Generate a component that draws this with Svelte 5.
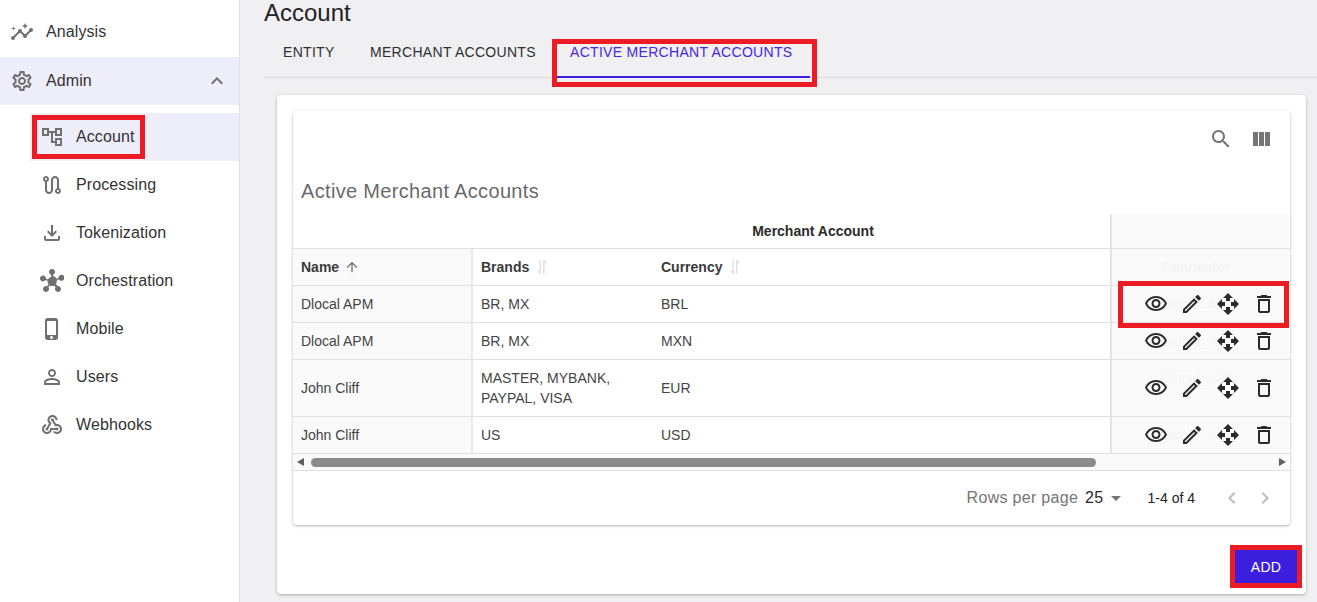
<script>
  const icons = {
    insights: 'M21 8c-1.45 0-2.26 1.44-1.93 2.51l-3.55 3.56c-.3-.09-.74-.09-1.04 0l-2.55-2.55C12.27 10.45 11.46 9 10 9c-1.45 0-2.27 1.44-1.93 2.52l-4.56 4.55C2.44 15.74 1 16.55 1 18c0 1.1.9 2 2 2 1.45 0 2.26-1.44 1.93-2.51l4.55-4.56c.3.09.74.09 1.04 0l2.55 2.55C12.73 16.55 13.54 18 15 18c1.45 0 2.27-1.44 1.93-2.52l3.56-3.55c1.07.33 2.51-.48 2.51-1.93 0-1.1-.9-2-2-2zM15 9l.94-2.07L18 6l-2.06-.93L15 3l-.92 2.07L12 6l2.08.93zM3.5 11L4 9l2-.5L4 8l-.5-2L3 8l-2 .5L3 9z',
    settings: 'M19.43 12.98c.04-.32.07-.64.07-.98 0-.34-.03-.66-.07-.98l2.11-1.65c.19-.15.24-.42.12-.64l-2-3.46c-.09-.16-.26-.25-.44-.25-.06 0-.12.01-.17.03l-2.49 1c-.52-.4-1.08-.73-1.69-.98l-.38-2.65C14.46 2.18 14.25 2 14 2h-4c-.25 0-.46.18-.49.42l-.38 2.65c-.61.25-1.17.59-1.69.98l-2.49-1c-.06-.02-.12-.03-.18-.03-.17 0-.34.09-.43.25l-2 3.46c-.13.22-.07.49.12.64l2.11 1.65c-.04.32-.07.65-.07.98 0 .33.03.66.07.98l-2.11 1.65c-.19.15-.24.42-.12.64l2 3.46c.09.16.26.25.44.25.06 0 .12-.01.17-.03l2.49-1c.52.4 1.08.73 1.69.98l.38 2.65c.03.24.24.42.49.42h4c.25 0 .46-.18.49-.42l.38-2.65c.61-.25 1.17-.59 1.69-.98l2.49 1c.06.02.12.03.18.03.17 0 .34-.09.43-.25l2-3.46c.12-.22.07-.49-.12-.64l-2.11-1.65zm-1.98-1.71c.04.31.05.52.05.73 0 .21-.02.43-.05.73l-.14 1.13.89.7 1.08.84-.7 1.21-1.27-.51-1.04-.42-.9.68c-.43.32-.84.56-1.25.73l-1.06.43-.16 1.13-.2 1.35h-1.4l-.19-1.35-.16-1.13-1.06-.43c-.43-.18-.83-.41-1.23-.71l-.91-.7-1.06.43-1.27.51-.7-1.21 1.08-.84.89-.7-.14-1.13c-.03-.31-.05-.54-.05-.74s.02-.43.05-.73l.14-1.13-.89-.7-1.08-.84.7-1.21 1.27.51 1.04.42.9-.68c.43-.32.84-.56 1.25-.73l1.06-.43.16-1.13.2-1.35h1.39l.19 1.35.16 1.13 1.06.43c.43.18.83.41 1.23.71l.91.7 1.06-.43 1.27-.51.7 1.21-1.07.85-.89.7.14 1.13zM12 8c-2.21 0-4 1.79-4 4s1.79 4 4 4 4-1.79 4-4-1.79-4-4-4zm0 6c-1.1 0-2-.9-2-2s.9-2 2-2 2 .9 2 2-.9 2-2 2z',
    tree: 'M22 11V3h-7v3H9V3H2v8h7V8h2v10h4v3h7v-8h-7v3h-2V8h2v3h7zM7 9H4V5h3v4zm10 6h3v4h-3v-4zm0-10h3v4h-3V5z',
    route: 'M19 15.18V7c0-2.21-1.79-4-4-4s-4 1.79-4 4v10c0 1.1-.9 2-2 2s-2-.9-2-2V8.82C8.16 8.4 9 7.3 9 6c0-1.66-1.34-3-3-3S3 4.34 3 6c0 1.3.84 2.4 2 2.82V17c0 2.21 1.79 4 4 4s4-1.79 4-4V7c0-1.1.9-2 2-2s2 .9 2 2v8.18c-1.16.41-2 1.51-2 2.82 0 1.66 1.34 3 3 3s3-1.34 3-3c0-1.3-.84-2.4-2-2.82zM6 7c-.55 0-1-.45-1-1s.45-1 1-1 1 .45 1 1-.45 1-1 1zm12 12c-.55 0-1-.45-1-1s.45-1 1-1 1 .45 1 1-.45 1-1 1z',
    download: 'M18 15v3H6v-3H4v3c0 1.1.9 2 2 2h12c1.1 0 2-.9 2-2v-3h-2zm-1-4l-1.41-1.41L13 12.17V4h-2v8.17L8.41 9.59 7 11l5 5 5-5z',
    hub: 'M8.4 18.2c.38.5.6 1.12.6 1.8 0 1.66-1.34 3-3 3s-3-1.34-3-3 1.34-3 3-3c.44 0 .85.09 1.23.26l1.41-1.77c-.92-1.03-1.29-2.39-1.09-3.69l-2.03-.68c-.54.83-1.46 1.38-2.52 1.38-1.66 0-3-1.34-3-3s1.34-3 3-3 3 1.34 3 3c0 .07 0 .14-.01.21l2.03.68c.64-1.21 1.82-2.09 3.22-2.32l.01-2.16C9.72 5.08 9 4.13 9 3c0-1.66 1.34-3 3-3s3 1.34 3 3c0 1.13-.72 2.08-1.75 2.19V7.35c1.4.23 2.58 1.11 3.22 2.32l2.03-.68c-.01-.07-.01-.14-.01-.21 0-1.66 1.34-3 3-3s3 1.34 3 3-1.34 3-3 3c-1.06 0-1.98-.55-2.52-1.37l-2.03.68c.2 1.29-.15 2.65-1.09 3.69l1.41 1.77C17.15 17.09 17.56 17 18 17c1.66 0 3 1.34 3 3s-1.34 3-3 3-3-1.34-3-3c0-.68.22-1.3.6-1.8l-1.41-1.77c-1.35.75-3.01.76-4.37 0L8.4 18.2z',
    phone: 'M15.5 1h-8C6.12 1 5 2.12 5 3.5v17C5 21.88 6.12 23 7.5 23h8c1.38 0 2.5-1.12 2.5-2.5v-17C18 2.12 16.88 1 15.5 1zm-4 21c-.83 0-1.5-.67-1.5-1.5s.67-1.5 1.5-1.5 1.5.67 1.5 1.5-.67 1.5-1.5 1.5zm4.5-4H7V4h9v14z',
    person: 'M12 5.9c1.16 0 2.1.94 2.1 2.1s-.94 2.1-2.1 2.1S9.9 9.16 9.9 8s.94-2.1 2.1-2.1m0 9c2.97 0 6.1 1.46 6.1 2.1v1.1H5.9V17c0-.64 3.13-2.1 6.1-2.1M12 4C9.79 4 8 5.79 8 8s1.79 4 4 4 4-1.79 4-4-1.79-4-4-4zm0 9c-2.67 0-8 1.34-8 4v3h16v-3c0-2.66-5.33-4-8-4z',
    webhook: 'M10 15h5.88c.27-.31.67-.5 1.12-.5.83 0 1.5.67 1.5 1.5s-.67 1.5-1.5 1.5c-.44 0-.84-.19-1.12-.5H11.9c-.46 2.28-2.48 4-4.9 4-2.76 0-5-2.24-5-5 0-2.42 1.72-4.44 4-4.9v2.07c-1.16.41-2 1.53-2 2.83 0 1.65 1.35 3 3 3s3-1.35 3-3v-1zm2.5-11c1.65 0 3 1.35 3 3h2c0-2.76-2.24-5-5-5s-5 2.24-5 5c0 1.43.6 2.71 1.55 3.62l-2.35 3.9c-.68.14-1.2.75-1.2 1.48 0 .83.67 1.5 1.5 1.5s1.5-.67 1.5-1.5c0-.16-.02-.31-.07-.45l3.38-5.63C10.49 9.61 9.5 8.42 9.5 7c0-1.65 1.35-3 3-3zm4.5 9c-.64 0-1.23.2-1.72.54l-3.05-5.07C11.53 8.35 11 7.74 11 7c0-.83.67-1.5 1.5-1.5S14 6.17 14 7c0 .15-.02.29-.06.43l2.19 3.65c.28-.05.57-.08.87-.08 2.76 0 5 2.24 5 5s-2.24 5-5 5c-1.85 0-3.47-1.01-4.33-2.5h2.67c.48.32 1.05.5 1.66.5 1.65 0 3-1.35 3-3s-1.35-3-3-3z',
    less: 'M12 8l-6 6 1.41 1.41L12 10.83l4.59 4.58L18 14z',
    search: 'M15.5 14h-.79l-.28-.27C15.41 12.59 16 11.11 16 9.5 16 5.91 13.09 3 9.5 3S3 5.91 3 9.5 5.91 16 9.5 16c1.61 0 3.09-.59 4.23-1.57l.27.28v.79l5 4.99L20.49 19l-4.99-5zm-6 0C7.01 14 5 11.99 5 9.5S7.01 5 9.5 5 14 7.01 14 9.5 11.99 14 9.5 14z',
    columns: 'M10 19h5V5h-5v14zm-6 0h5V5H4v14zM16 5v14h5V5h-5z',
    eye: 'M12 6c3.79 0 7.17 2.13 8.82 5.5C19.17 14.87 15.79 17 12 17s-7.17-2.13-8.82-5.5C4.83 8.13 8.21 6 12 6m0-2C7 4 2.73 7.11 1 11.5 2.73 15.89 7 19 12 19s9.27-3.11 11-7.5C21.27 7.11 17 4 12 4zm0 5c1.38 0 2.5 1.12 2.5 2.5S13.38 14 12 14s-2.5-1.12-2.5-2.5S10.62 9 12 9m0-2c-2.48 0-4.5 2.02-4.5 4.5S9.52 16 12 16s4.5-2.02 4.5-4.5S14.48 7 12 7z',
    edit: 'M14.06 9.02l.92.92L5.92 19H5v-.92l9.06-9.06M17.66 3c-.25 0-.51.1-.7.29l-1.83 1.83 3.75 3.75 1.83-1.83c.39-.39.39-1.02 0-1.41l-2.34-2.34c-.2-.2-.45-.29-.71-.29zm-3.6 3.19L3 17.25V21h3.75L17.81 9.94l-3.75-3.75z',
    move: 'M10 9h4V6h3l-5-5-5 5h3v3zm-1 1H6V7l-5 5 5 5v-3h3v-4zm14 2l-5-5v3h-3v4h3v3l5-5zm-9 3h-4v3H7l5 5 5-5h-3v-3z',
    trash: 'M6 19c0 1.1.9 2 2 2h8c1.1 0 2-.9 2-2V7H6v12zM8 9h8v10H8V9zm7.5-5l-1-1h-5l-1 1H5v2h14V4z',
    up: 'M4 12l1.41 1.41L11 7.83V20h2V7.83l5.58 5.59L20 12l-8-8-8 8z',
    swap: 'M10 2H8.4v17.5L5.6 16.7 4.6 17.7 10 23V2zM14 22h1.6V4.5l2.8 2.8 1-1L14.8 1.2 14 2z',
    drop: 'M7 10l5 5 5-5z',
    prev: 'M15.41 7.41L14 6l-6 6 6 6 1.41-1.41L10.83 12z',
    next: 'M10 6L8.59 7.41 13.17 12l-4.58 4.59L10 18l6-6z'
  };
  const subItems = [
    ['tree', 'Account', true],
    ['route', 'Processing', false],
    ['download', 'Tokenization', false],
    ['hub', 'Orchestration', false],
    ['phone', 'Mobile', false],
    ['person', 'Users', false],
    ['webhook', 'Webhooks', false]
  ];
  const rows = [
    ['Dlocal APM', 'BR, MX', 'BRL', 'short'],
    ['Dlocal APM', 'BR, MX', 'MXN', 'short'],
    ['John Cliff', 'MASTER, MYBANK, PAYPAL, VISA', 'EUR', 'tall'],
    ['John Cliff', 'US', 'USD', 'short']
  ];
</script>

{#snippet icon(name, cls)}
  <svg class={cls} viewBox="0 0 24 24" aria-hidden="true"><path d={icons[name]} /></svg>
{/snippet}

<div class="app">
  <aside class="sidebar">
    <div class="item">{@render icon('insights', 'ico nav')}<span>Analysis</span></div>
    <div class="item open">{@render icon('settings', 'ico nav')}<span>Admin</span>{@render icon('less', 'ico caret')}</div>
    <div class="sub">
      {#each subItems as [ic, label, active]}
        <div class="item subitem" class:active>{@render icon(ic, 'ico nav')}<span>{label}</span></div>
      {/each}
    </div>
  </aside>

  <main class="main">
    <h1>Account</h1>
    <div class="tabs">
      <div class="tab t1">ENTITY</div>
      <div class="tab t2">MERCHANT ACCOUNTS</div>
      <div class="tab t3">ACTIVE MERCHANT ACCOUNTS</div>
    </div>

    <section class="card">
      <div class="inner">
        <div class="toolbar">
          {@render icon('search', 'ico tool')}
          {@render icon('columns', 'ico tool')}
        </div>
        <h2>Active Merchant Accounts</h2>
        <table>
          <colgroup><col class="c1" /><col class="c2" /><col /><col class="c4" /></colgroup>
          <thead>
            <tr class="group">
              <th colspan="3" class="groupcell">Merchant Account</th>
              <th class="act"></th>
            </tr>
            <tr class="head">
              <th class="name"><span class="hd">Name {@render icon('up', 'ico sort')}</span></th>
              <th><span class="hd">Brands {@render icon('swap', 'ico sort off')}</span></th>
              <th><span class="hd">Currency {@render icon('swap', 'ico sort off')}</span></th>
              <th class="act"><span class="ghost">Connector</span></th>
            </tr>
          </thead>
          <tbody>
            {#each rows as [n, b, c, h]}
              <tr class={h}>
                <td class="name">{n}</td>
                <td>{b}</td>
                <td>{c}</td>
                <td class="act">
                  <span class="ghost">Dlocal_APM</span>
                  <div class="actions">
                    {@render icon('eye', 'ico action')}
                    {@render icon('edit', 'ico action')}
                    {@render icon('move', 'ico action')}
                    {@render icon('trash', 'ico action')}
                  </div>
                </td>
              </tr>
            {/each}
          </tbody>
        </table>
        <div class="scrollbar">
          <span class="arrow left"></span>
          <span class="thumb"></span>
          <span class="arrow right"></span>
        </div>
        <div class="pager">
          <span class="rpp">Rows per page</span>
          <span class="num">25</span>
          {@render icon('drop', 'ico dropi')}
          <span class="range">1-4 of 4</span>
          {@render icon('prev', 'ico pg first')}
          {@render icon('next', 'ico pg')}
        </div>
      </div>
      <div class="foot"><button class="add">ADD</button></div>
    </section>
  </main>

  <div class="mark m-tab"></div>
  <div class="mark m-account"></div>
  <div class="mark m-actions"></div>
  <div class="mark m-add"></div>
</div>

<style>
  :global(body) { margin: 0; }
  .app {
    position: relative;
    display: flex;
    width: 1317px;
    height: 602px;
    overflow: hidden;
    background: #f0f0f3;
    font-family: "Liberation Sans", Arial, sans-serif;
    color: #2b2b2b;
  }
  .ico { display: block; fill: currentColor; flex: none; }

  .sidebar {
    width: 239px;
    flex: none;
    background: #fff;
    border-right: 1px solid #e2e2e4;
    padding-top: 8px;
  }
  .item {
    display: flex;
    align-items: center;
    height: 48px;
    padding-left: 10px;
    font-size: 16px;
    letter-spacing: 0.1px;
    color: #333;
  }
  .item span { margin-left: 12px; }
  .item.open { background: #eeedfa; margin-top: 1px; }
  .nav { width: 24px; height: 24px; color: #707070; }
  .caret { width: 24px; height: 24px; color: #707070; margin-left: auto; margin-right: 10px; }
  .sub { padding-top: 8px; }
  .subitem { margin-left: 30px; padding-left: 10px; }
  .subitem.active { background: #eeedfa; }

  .main { flex: 1; min-width: 0; padding-left: 24px; }
  h1 {
    margin: 0;
    font-size: 24px;
    font-weight: 400;
    line-height: 26px;
    color: #222;
  }
  .tabs {
    display: flex;
    height: 52px;
    border-bottom: 1px solid #d9d9db;
    box-sizing: border-box;
    margin-bottom: 17px;
  }
  .tab {
    height: 52px;
    box-sizing: border-box;
    padding-top: 18px;
    font-size: 14px;
    line-height: 16px;
    letter-spacing: 0.3px;
    color: #2e2e2e;
  }
  .t1 { padding-left: 19px; width: 88px; }
  .t2 { padding-left: 18px; width: 205px; }
  .t3 {
    padding-left: 13px;
    width: 253px;
    color: #4527e0;
    border-bottom: 2px solid #3b1fdd;
  }

  .card {
    margin: 0 11px 0 13px;
    height: 499px;
    box-sizing: border-box;
    padding: 16px;
    background: #fff;
    border-radius: 4px;
    box-shadow: 0 1px 3px rgba(0,0,0,.3);
  }
  .inner {
    height: 414px;
    background: #fff;
    border-radius: 4px;
    box-shadow: 0 1px 3px rgba(0,0,0,.3);
    display: flex;
    flex-direction: column;
  }
  .toolbar {
    display: flex;
    justify-content: flex-end;
    gap: 16px;
    height: 56px;
    padding: 16px 17px 0 0;
    box-sizing: border-box;
  }
  .tool { width: 24px; height: 24px; color: #757575; }
  h2 {
    margin: 11px 0 0;
    padding-left: 8px;
    height: 36px;
    font-size: 20px;
    font-weight: 400;
    line-height: 26px;
    letter-spacing: 0.33px;
    color: #6a6a6a;
  }

  table {
    width: 997px;
    table-layout: fixed;
    border-collapse: separate;
    border-spacing: 0;
    font-size: 14px;
    color: #444;
  }
  .c1 { width: 180px; }
  .c2 { width: 180px; }
  .c4 { width: 180px; }
  th, td {
    padding: 0 0 0 8px;
    text-align: left;
    border-bottom: 1px solid #e0e0e0;
    box-sizing: border-box;
    line-height: 20px;
    position: relative;
  }
  .group th { height: 35px; font-weight: 700; color: #2b2b2b; }
  .groupcell { text-align: center; padding-left: 223px; }
  .head th { height: 37px; font-weight: 700; color: #3a3a3a; }
  .short td { height: 37px; }
  .tall td { height: 57px; }
  .name { background: #fafafa; border-right: 2px solid #e8e8e8; }
  .act { background: #fafafa; border-left: 2px solid #e4e4e4; padding: 0; overflow: hidden; }
  .hd { display: inline-flex; align-items: center; gap: 5px; }
  .sort { width: 16px; height: 16px; color: #757575; }
  .sort.off { color: #d4d4d4; }
  .ghost {
    position: absolute;
    left: 49px;
    top: 8px;
    color: #f5f5f5;
    white-space: nowrap;
  }
  .actions {
    position: relative;
    display: flex;
    gap: 12px;
    padding-left: 32px;
    color: #2a2a2a;
  }
  .action { width: 24px; height: 24px; }

  .scrollbar {
    display: flex;
    align-items: center;
    height: 16px;
    background: #fafafa;
    border-bottom: 1px solid #e0e0e0;
    position: relative;
  }
  .thumb {
    margin-left: 18px;
    width: 785px;
    height: 9px;
    border-radius: 5px;
    background: #8b8b8b;
  }
  .arrow { width: 0; height: 0; border-style: solid; border-color: transparent; position: absolute; top: 4px; }
  .arrow.left { left: 4px; border-width: 4px 7px 4px 0; border-right-color: #606060; }
  .arrow.right { right: 4px; border-width: 4px 0 4px 7px; border-left-color: #606060; }

  .pager {
    flex: 1;
    display: flex;
    align-items: center;
    justify-content: flex-end;
    padding-right: 13px;
  }
  .rpp { font-size: 16px; color: #757575; letter-spacing: 0.3px; }
  .num { font-size: 16px; color: #2b2b2b; margin-left: 7px; letter-spacing: 0.3px; }
  .dropi { width: 24px; height: 24px; color: #757575; }
  .range { font-size: 14px; color: #222; margin-left: 20px; margin-right: 25px; }
  .pg { width: 24px; height: 24px; color: #bdbdbd; margin-left: 9px; }
  .pg.first { margin-left: 0; }

  .foot { display: flex; justify-content: flex-end; padding: 25px 0 0; margin-right: -7px; }
  .add {
    width: 62px;
    height: 33px;
    border: 0;
    border-radius: 0;
    background: #3b1fdd;
    color: #fff;
    font: 400 14px "Liberation Sans", Arial, sans-serif;
    letter-spacing: 0.3px;
    padding: 0;
  }

  .mark { position: absolute; border: 5px solid #ed1c24; box-sizing: border-box; }
  .m-tab { left: 552px; top: 39px; width: 265px; height: 48px; }
  .m-account { left: 32px; top: 115px; width: 113px; height: 44px; }
  .m-actions { left: 1118px; top: 281px; width: 171px; height: 47px; }
  .m-add { left: 1230px; top: 545px; width: 72px; height: 43px; }
</style>
